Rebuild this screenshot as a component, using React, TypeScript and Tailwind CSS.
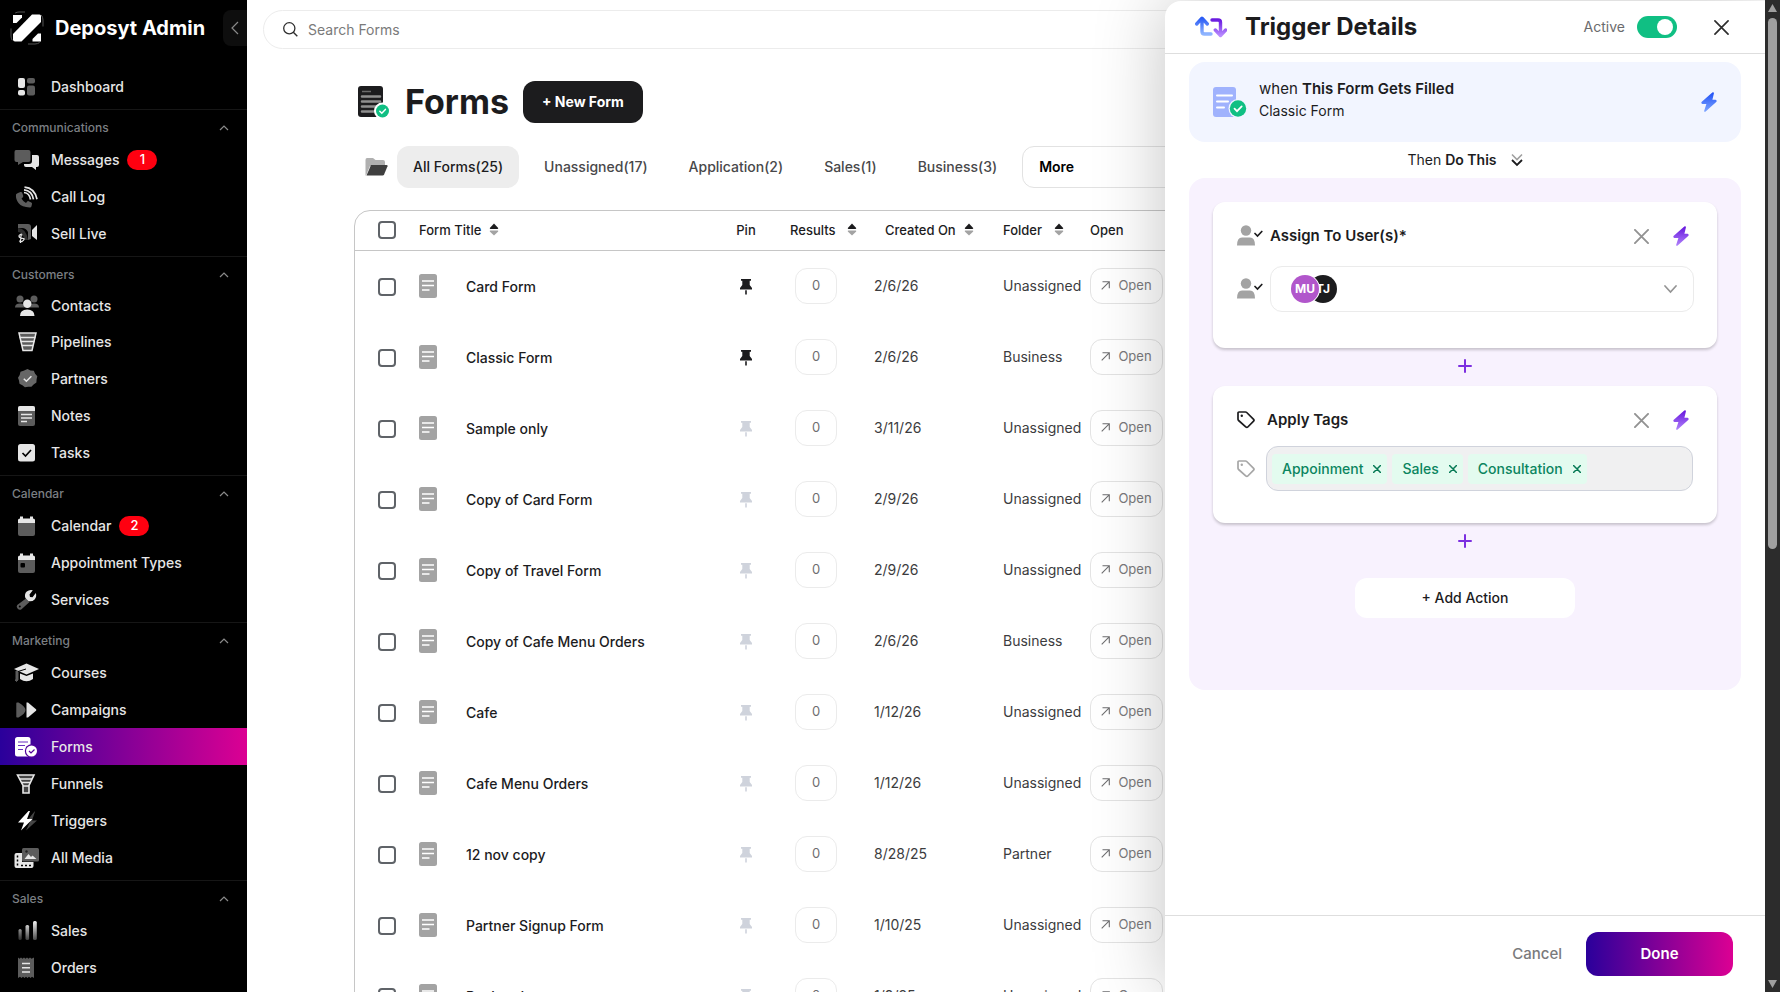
import { useState, type ReactNode } from "react";
import clsx from "clsx";

/* ------------------------------------------------------------------ */
/*  Data                                                               */
/* ------------------------------------------------------------------ */

type NavItem = { label: string; icon: ReactNode; badge?: number; active?: boolean };
type NavSection = { title: string; items: NavItem[] };

type FormRow = {
  title: string;
  date: string;
  folder: string;
  pinned?: boolean;
};

const LIGHT = "#e6e6e6";
const DIM = "#5c5c5c";

const FORMS: FormRow[] = [
  { title: "Card Form", date: "2/6/26", folder: "Unassigned", pinned: true },
  { title: "Classic Form", date: "2/6/26", folder: "Business", pinned: true },
  { title: "Sample only", date: "3/11/26", folder: "Unassigned" },
  { title: "Copy of Card Form", date: "2/9/26", folder: "Unassigned" },
  { title: "Copy of Travel Form", date: "2/9/26", folder: "Unassigned" },
  { title: "Copy of Cafe Menu Orders", date: "2/6/26", folder: "Business" },
  { title: "Cafe", date: "1/12/26", folder: "Unassigned" },
  { title: "Cafe Menu Orders", date: "1/12/26", folder: "Unassigned" },
  { title: "12 nov copy", date: "8/28/25", folder: "Partner" },
  { title: "Partner Signup Form", date: "1/10/25", folder: "Unassigned" },
  { title: "Backend", date: "1/9/25", folder: "Unassigned" },
];

const TABS = ["All Forms(25)", "Unassigned(17)", "Application(2)", "Sales(1)", "Business(3)"];

/* ------------------------------------------------------------------ */
/*  Sidebar icons (26x22 box)                                          */
/* ------------------------------------------------------------------ */

function NavSvg({ children }: { children: ReactNode }) {
  return (
    <svg width="26" height="22" viewBox="0 0 26 22" fill="none" aria-hidden="true">
      {children}
    </svg>
  );
}

const icons = {
  dashboard: (
    <NavSvg>
      <rect x="4" y="2" width="7" height="10" rx="2" fill={LIGHT} />
      <rect x="4" y="14" width="7" height="5.5" rx="2" fill={LIGHT} />
      <rect x="13" y="2" width="8" height="5.5" rx="2" fill={DIM} />
      <rect x="13" y="9.5" width="8" height="10" rx="2" fill={DIM} />
    </NavSvg>
  ),
  messages: (
    <NavSvg>
      <path d="M13 6h10q2 0 2 2v8q0 2-2 2h-1v3l-4-3h-6q-2 0-2-2v-1h5q3 0 3-3V6z" fill={LIGHT} />
      <path d="M2 1h12.500q2 0 2 2v8q0 2-2 2H9l-5 3v-3H2.500q-2 0-2-2V3q0-2 1.500-2z" fill={DIM} />
    </NavSvg>
  ),
  callLog: (
    <NavSvg>
      <path
        d="M4 7l2.500-1q1.200-.4 1.700.8l1 3q.3.900-.5 1.600l-1.200 1q1.500 3 4.500 4.500l1-1.200q.7-.8 1.600-.5l2.700 1.200q1 .5.700 1.600l-.6 2.400q-.3 1-1.400 1Q8 21.500 4.500 17 1.500 13 2 8.500 2.400 7.500 4 7z"
        fill={DIM}
      />
      <path d="M10 6.500q5.500.5 6.500 7M10 3.800q8 .7 9.500 9.500M10.500 1.200q10 .8 12.500 12" stroke={LIGHT} strokeWidth="1.700" />
    </NavSvg>
  ),
  sellLive: (
    <NavSvg>
      <path d="M4 1h10q3 0 3 3v12l-3 1V9q-2-4-6-4L4 5z" fill={DIM} />
      <path d="M4 5q8 0 10 12h-4Q9 9 4 9z" fill="#2e2e2e" />
      <path d="M18 7l5-5v15l-5-4z" fill={LIGHT} />
      <path d="M8.500 12q-3.500-1-3.500 1t3.500 2.300-.5 3.200l-3-.5M7.200 10.500l-.8 9.500" stroke={LIGHT} strokeWidth="1.200" />
    </NavSvg>
  ),
  contacts: (
    <NavSvg>
      <circle cx="6" cy="4" r="3.500" fill={DIM} />
      <circle cx="20" cy="4" r="3.500" fill={DIM} />
      <path d="M1 12.500q0-4 5-4t5 4zM15 12.500q0-4 5-4t5 4z" fill={DIM} />
      <circle cx="13.300" cy="8.800" r="4.200" fill={LIGHT} />
      <path d="M6 21q0-6.500 7.200-6.500T20.500 21z" fill={LIGHT} />
    </NavSvg>
  ),
  pipelines: (
    <NavSvg>
      <path d="M5 2h17l-4 17.500H9z" fill={DIM} stroke={LIGHT} strokeWidth="1.500" />
      <path d="M5.500 6.500h16M6.500 10.500h14M8 14.500h11" stroke={LIGHT} strokeWidth="1.400" />
    </NavSvg>
  ),
  partners: (
    <NavSvg>
      <path
        d="M13.500 1l3 1.500 3.300.2 1.300 3 2.200 2.500-.7 3.200-.2 3.200-2.800 1.800-2.200 2.400-3.200-.1-3.300.6-2.500-2.100-2.900-1.500-.5-3.200L4 9.800l1.700-2.900.8-3.100 3.100-1z"
        fill="#666"
      />
      <path d="M9.800 10.700l2.600 2.600 5-5" stroke={LIGHT} strokeWidth="1.500" />
    </NavSvg>
  ),
  notes: (
    <NavSvg>
      <rect x="4" y="1" width="17" height="20" rx="2" fill={DIM} />
      <path d="M4 6V3q0-2 2-2h13q2 0 2 2v3z" fill={LIGHT} />
      <path d="M7 9.500h11M7 13h11M7 16.500h6" stroke={LIGHT} strokeWidth="1.400" />
    </NavSvg>
  ),
  tasks: (
    <NavSvg>
      <rect x="4" y="2" width="17" height="17.500" rx="2.500" fill={LIGHT} />
      <path d="M8.500 11l3 3 5.500-6" stroke="#000" strokeWidth="1.700" />
    </NavSvg>
  ),
  calendar: (
    <NavSvg>
      <path d="M4 8h17v11q0 2-2 2H6q-2 0-2-2z" fill={DIM} />
      <path d="M4 8V5q0-1.500 2-1.500V1.500h3v2h7v-2h3v2q2 0 2 1.500v3z" fill={LIGHT} />
    </NavSvg>
  ),
  appointments: (
    <NavSvg>
      <path d="M4 8h17v11q0 2-2 2H6q-2 0-2-2z" fill={DIM} />
      <path d="M4 8V5q0-1.500 2-1.500V1.500h3v2h7v-2h3v2q2 0 2 1.500v3z" fill={LIGHT} />
      <rect x="6.500" y="11" width="4.500" height="4.500" rx="1" fill="#000" />
    </NavSvg>
  ),
  services: (
    <NavSvg>
      <path d="M12 9.500l3.500 3.500-8 7.200q-2 1.300-3.800-.5t-.5-3.700z" fill={DIM} />
      <path d="M18.800 1.200l-3.300 4.300.5 2.500 2.500.3 3.300-4.300q1.200 3.800-1.200 6.400-2.500 2.600-6.200 1.700l-3-3Q10 5 12.800 2.500q2.700-2.300 6-1.300z" fill={LIGHT} />
      <circle cx="5.800" cy="17.500" r="1" fill="#000" />
    </NavSvg>
  ),
  courses: (
    <NavSvg>
      <path d="M2 9v9H1l1.500 1.500L4 18V9z" fill={DIM} stroke={DIM} />
      <path d="M12.500 1.500L25 7l-12.500 5.500L0 7z" fill={LIGHT} />
      <path d="M6 11.500l6.500 2.600 6.500-2.600v5.500q-6.500 4.500-13 0z" fill={LIGHT} />
      <path d="M4 9.500l8-2.500" stroke="#000" strokeWidth="1" />
    </NavSvg>
  ),
  campaigns: (
    <NavSvg>
      <path d="M3 3.500h1.500q7 4 7 7.500t-7 7.500H3q-.7 0-.7-.7V4.200q0-.7.7-.7z" fill={DIM} />
      <path d="M12.500 3.500h1.500l8 6.800q.8.700 0 1.400l-8 6.800h-1.500z" fill={LIGHT} />
    </NavSvg>
  ),
  forms: (
    <NavSvg>
      <rect x="1" y="1" width="15.500" height="19.500" rx="2.500" fill="#fff" />
      <path d="M4 6h10M4 9.500h7M4 13.500h5" stroke="#6a2fc0" strokeWidth="1.200" />
      <circle cx="17.500" cy="15" r="6.700" fill="#4f009a" />
      <circle cx="17.500" cy="15" r="5.500" fill="#fff" />
      <path d="M15 15l2 2 3.500-3.500" stroke="#55009b" strokeWidth="1.200" />
    </NavSvg>
  ),
  funnels: (
    <NavSvg>
      <path d="M3.500 2h16.500l-5 10.500V20H9v-7.500z" fill="#444" stroke={LIGHT} strokeWidth="1.600" />
      <path d="M5.500 6h12.500M7.500 9.500h8.500M9 13h6" stroke={LIGHT} strokeWidth="1.400" />
    </NavSvg>
  ),
  triggers: (
    <NavSvg>
      <path d="M20.500 1.500L12 12h4l-4 8.500L23 10.500h-5l3-9z" fill="#454545" />
      <path d="M14.500 1L4 12.500h6L7 20.500 18.500 9H13l3-8z" fill="#fff" />
    </NavSvg>
  ),
  media: (
    <NavSvg>
      <path d="M2.500 6H8v9h11.500v4q0 2-2 2h-15q-2 0-2-2V8q0-2 2-2z" fill={LIGHT} />
      <path d="M3.500 8.500v10M7 18.500h11" stroke="#000" strokeWidth="1.500" strokeDasharray="2 2" />
      <rect x="8" y="1" width="17" height="13.500" rx="1.500" fill={DIM} />
      <path d="M10.500 12l4-5 2.500 3 1.500-1.500 4 3.500z" fill={LIGHT} />
      <circle cx="12.500" cy="4.500" r="1.200" fill="#222" />
    </NavSvg>
  ),
  sales: (
    <NavSvg>
      <defs>
        <linearGradient id="bars" x1="0" y1="0" x2="0" y2="1">
          <stop stopColor="#f2f2f2" />
          <stop offset="1" stopColor="#4a4a4a" />
        </linearGradient>
      </defs>
      <rect x="4.500" y="9" width="3.200" height="11" rx="1.500" fill="url(#bars)" opacity=".6" />
      <rect x="11.500" y="5" width="3.600" height="15" rx="1.500" fill="url(#bars)" opacity=".85" />
      <rect x="19" y="1" width="3.800" height="19" rx="1.500" fill="url(#bars)" />
    </NavSvg>
  ),
  orders: (
    <NavSvg>
      <path
        d="M4 .5l1.500 1.200L7 .5l1.500 1.200L10 .5l1.500 1.200L13 .5l1.500 1.200L16 .5l1.500 1.200L20 .5v20.500l-2-1.200-1.500 1.200-1.500-1.200-1.500 1.200-1.500-1.200-1.500 1.200L9 19.800 7.500 21 6 19.800 4 21z"
        fill={DIM}
      />
      <path d="M8 6.500h8M8 10.700h8M8 15h8" stroke={LIGHT} strokeWidth="1.500" />
    </NavSvg>
  ),
};

const SECTIONS: NavSection[] = [
  {
    title: "Communications",
    items: [
      { label: "Messages", icon: icons.messages, badge: 1 },
      { label: "Call Log", icon: icons.callLog },
      { label: "Sell Live", icon: icons.sellLive },
    ],
  },
  {
    title: "Customers",
    items: [
      { label: "Contacts", icon: icons.contacts },
      { label: "Pipelines", icon: icons.pipelines },
      { label: "Partners", icon: icons.partners },
      { label: "Notes", icon: icons.notes },
      { label: "Tasks", icon: icons.tasks },
    ],
  },
  {
    title: "Calendar",
    items: [
      { label: "Calendar", icon: icons.calendar, badge: 2 },
      { label: "Appointment Types", icon: icons.appointments },
      { label: "Services", icon: icons.services },
    ],
  },
  {
    title: "Marketing",
    items: [
      { label: "Courses", icon: icons.courses },
      { label: "Campaigns", icon: icons.campaigns },
      { label: "Forms", icon: icons.forms, active: true },
      { label: "Funnels", icon: icons.funnels },
      { label: "Triggers", icon: icons.triggers },
      { label: "All Media", icon: icons.media },
    ],
  },
  {
    title: "Sales",
    items: [
      { label: "Sales", icon: icons.sales },
      { label: "Orders", icon: icons.orders },
    ],
  },
];

/* ------------------------------------------------------------------ */
/*  Shared icons                                                       */
/* ------------------------------------------------------------------ */

function Bolt({ id, from, to }: { id: string; from: string; to: string }) {
  return (
    <svg width="16" height="20" viewBox="0 0 16 20" aria-hidden="true">
      <defs>
        <linearGradient id={id} x1="0" y1="0" x2="0" y2="1">
          <stop stopColor={from} />
          <stop offset="1" stopColor={to} />
        </linearGradient>
      </defs>
      <path
        d="M11.300.400L.8 9.800q-1.200 1.500.6 2.200h4l-2.200 6.800q-.2 1.500 1.200.9L15.200 10q1.200-1.500-.6-2.200h-3.200l1.500-6.400q.1-1.600-1.600-1z"
        fill={`url(#${id})`}
      />
    </svg>
  );
}

function Cross({ size, color, width = 2 }: { size: number; color: string; width?: number }) {
  return (
    <svg width={size} height={size} viewBox="0 0 16 16" fill="none" aria-hidden="true">
      <path d="M1 1l14 14M15 1L1 15" stroke={color} strokeWidth={width} strokeLinecap="round" />
    </svg>
  );
}

function Plus() {
  return (
    <svg width="14" height="14" viewBox="0 0 14 14" aria-hidden="true">
      <path d="M7 1v12M1 7h12" stroke="#7c2fe0" strokeWidth="2" strokeLinecap="round" />
    </svg>
  );
}

function UserCheck() {
  return (
    <svg width="26" height="22" viewBox="0 0 26 22" fill="none" aria-hidden="true">
      <circle cx="9" cy="5.500" r="5.200" fill="#a3a3a3" />
      <path d="M0 20.500q0-8 5-8h8q5 0 5 8z" fill="#a3a3a3" />
      <path d="M18 8.500l2.500 2.500 4.300-4.500" stroke="#1c1c1e" strokeWidth="1.700" strokeLinecap="round" />
    </svg>
  );
}

function TagIcon({ color }: { color: string }) {
  return (
    <svg width="18" height="18" viewBox="0 0 18 18" fill="none" aria-hidden="true">
      <path
        d="M2 1h6.500q.7 0 1.200.5l6.900 6.900q.8.900 0 1.700L10.800 16q-.9.900-1.800 0L1.600 9.500Q1 9 1 8.200V2q0-1 1-1z"
        stroke={color}
        strokeWidth="1.700"
      />
      <circle cx="4.800" cy="4.800" r="1.200" fill={color} />
    </svg>
  );
}

function DocCheck({ fill, line }: { fill: string; line: string }) {
  return (
    <svg width="36" height="32" viewBox="0 0 36 32" fill="none" aria-hidden="true">
      <rect x="1" y="1" width="23" height="30" rx="3" fill={fill} />
      <path d="M5 9.500h15M5 15.500h11M5 21.500h7" stroke={line} strokeWidth="2" strokeLinecap="round" />
      <circle cx="26" cy="22.500" r="9.500" fill="#f2f5ff" />
      <circle cx="26" cy="22.500" r="8.200" fill="#10bf83" />
      <path d="M22.500 22.700l2.500 2.500 4.700-4.900" stroke="#fff" strokeWidth="1.700" strokeLinecap="round" />
    </svg>
  );
}

function SortIcon() {
  return (
    <svg width="10" height="14" viewBox="0 0 10 14" aria-hidden="true">
      <path d="M5 .5l4.200 4.500q.3.800-.6.900H1.400Q.5 5.800.8 5z" fill="#1c1c1e" />
      <path d="M5 12.500L.8 8.500q-.3-.8.600-.9h7.200q.9.100.6.900z" fill="#a3a3a3" />
    </svg>
  );
}

function SortButton({ label }: { label: string }) {
  return (
    <button type="button" aria-label={`Sort by ${label}`}>
      <SortIcon />
    </button>
  );
}

function Checkbox({ label }: { label: string }) {
  return (
    <input
      type="checkbox"
      aria-label={label}
      className="block size-[18px] appearance-none rounded border-2 border-[#5f6368] bg-white checked:bg-[#5f6368]"
    />
  );
}

/* ------------------------------------------------------------------ */
/*  Sidebar                                                            */
/* ------------------------------------------------------------------ */

function NavLink({ item, first }: { item: NavItem; first?: boolean }) {
  return (
    <a
      href="#"
      className={clsx(
        "flex items-center gap-[11px] pl-[14px] text-sm font-medium text-[#e6e6e6]",
        first ? "h-[35px]" : "h-[37px]",
        item.active && "bg-linear-to-r/srgb from-[#2a009b] to-[#dc0093]"
      )}
    >
      {item.icon}
      <span className="flex items-center gap-2">
        {item.label}
        {item.badge && (
          <span className="flex h-5 w-[30px] items-center justify-center rounded-full bg-[#ff0010] text-[13px] text-white">
            {item.badge}
          </span>
        )}
      </span>
    </a>
  );
}

function Sidebar() {
  return (
    <nav className="flex w-[247px] shrink-0 flex-col overflow-hidden bg-black">
      <div className="flex h-[68px] shrink-0 items-start pt-[10px]">
        <svg width="34" height="34" viewBox="0 0 34 34" className="mt-px ml-[10px] shrink-0" aria-hidden="true">
          <rect x="1" y="1" width="32" height="32" rx="8" fill="none" stroke="#555" strokeDasharray="12 17" strokeDashoffset="6" />
          <path d="M22 3.500h7.500q1.500 0 1.500 1.500v6L11.500 30.500H5q-2 0-2-2V23z" fill="#fff" />
          <path d="M3 4h9v2.500L6.500 12H3z" fill="#fff" />
          <path d="M31 30.500h-8.500v-2.500l5.500-5.500h3z" fill="#fff" />
        </svg>
        <span className="mt-[2px] ml-[11px] text-xl leading-8 font-bold whitespace-nowrap text-white">Deposyt Admin</span>
        <button
          type="button"
          aria-label="Collapse sidebar"
          className="ml-auto flex h-9 w-6 items-center justify-center rounded-l-lg bg-[#0e0e0e]"
        >
          <svg width="8" height="14" viewBox="0 0 8 14" fill="none" aria-hidden="true">
            <path d="M7 1L1 7l6 6" stroke="#8a8a8a" strokeWidth="1.200" />
          </svg>
        </button>
      </div>
      <NavLink item={{ label: "Dashboard", icon: icons.dashboard }} />
      {SECTIONS.map((section) => (
        <section key={section.title} className="mt-1 border-t border-[#161616]">
          <button
            type="button"
            aria-expanded="true"
            className="flex h-[31px] w-full items-center justify-between pt-[5px] pr-[18px] pl-3 text-xs font-medium text-[#7b7f83]"
          >
            {section.title}
            <svg width="10" height="6" viewBox="0 0 10 6" fill="none" aria-hidden="true">
              <path d="M1 5l4-4 4 4" stroke="#8a8a8a" strokeWidth="1.200" />
            </svg>
          </button>
          {section.items.map((item, i) => (
            <NavLink key={item.label} item={item} first={i === 0 && section.title === "Customers"} />
          ))}
        </section>
      ))}
    </nav>
  );
}

/* ------------------------------------------------------------------ */
/*  Forms list                                                         */
/* ------------------------------------------------------------------ */

function FormsTable() {
  return (
    <div className="mt-[22px] overflow-hidden rounded-t-2xl border border-[#c6c6c6]">
      <table className="w-full table-fixed text-left">
        <colgroup>
          <col className="w-16" />
          <col className="w-[299px]" />
          <col className="w-14" />
          <col className="w-[100px]" />
          <col className="w-[129px]" />
          <col className="w-[87px]" />
          <col />
        </colgroup>
        <thead className="text-[13px] text-[#1c1c1e]">
          <tr className="h-[39px] border-b border-[#c6c6c6] whitespace-nowrap">
            <th className="pl-[23px]">
              <Checkbox label="Select all forms" />
            </th>
            <th className="font-medium">
              <span className="flex items-center gap-2">
                Form Title <SortButton label="Form Title" />
              </span>
            </th>
            <th className="text-center font-medium">Pin</th>
            <th className="pl-4 font-medium">
              <span className="flex items-center gap-3">
                Results <SortButton label="Results" />
              </span>
            </th>
            <th className="pl-[11px] font-medium">
              <span className="flex items-center gap-2">
                Created On <SortButton label="Created On" />
              </span>
            </th>
            <th className="font-medium">
              <span className="flex items-center gap-3">
                Folder <SortButton label="Folder" />
              </span>
            </th>
            <th className="font-medium">Open</th>
          </tr>
        </thead>
        <tbody className="text-sm text-[#3c3c3e]">
          {FORMS.map((form) => (
            <tr key={form.title} className="h-[71px]">
              <td className="pt-0.5 pl-[23px]">
                <Checkbox label={`Select ${form.title}`} />
              </td>
              <td>
                <span className="flex items-center gap-[29px] font-medium text-[#1c1c1e]">
                  <svg width="18" height="24" viewBox="0 0 18 24" aria-hidden="true">
                    <rect width="18" height="24" rx="2.500" fill="#a3a3a3" />
                    <path d="M3 7h12M3 11.500h12M3 16h7.500" stroke="#fff" strokeWidth="1.600" />
                  </svg>
                  <span className="pt-0.5">{form.title}</span>
                </span>
              </td>
              <td className="text-center">
                <button type="button" aria-label={`Pin ${form.title}`} className="align-middle">
                  <svg width="14" height="16" viewBox="0 0 14 16" aria-hidden="true">
                    <path
                      d="M2 0h10v1.800h-1.300V6L13 9v1.500H1V9l2.300-3V1.800H2zM6.200 11.300h1.600v4.200H6.200z"
                      fill={form.pinned ? "#1c1c1e" : "#cfd3dc"}
                    />
                  </svg>
                </button>
              </td>
              <td className="pl-[21px]">
                <button type="button" className="block h-9 w-[42px] rounded-xl border border-[#ebebeb] text-[13px] text-[#6e6e70]">
                  0
                </button>
              </td>
              <td>{form.date}</td>
              <td>{form.folder}</td>
              <td>
                <a
                  href="#"
                  className="flex h-9 w-[73px] items-center justify-center gap-2 rounded-xl border border-[#e3e3e3] text-[13px] text-[#7a7a7c]"
                >
                  <svg width="9" height="9" viewBox="0 0 9 9" fill="none" aria-hidden="true">
                    <path d="M.7 8.300l7.500-7.500M1.500.7h6.800v6.500" stroke="#6e6e70" strokeWidth="1.100" />
                  </svg>
                  Open
                </a>
              </td>
            </tr>
          ))}
        </tbody>
      </table>
    </div>
  );
}

function FormsPage() {
  const [tab, setTab] = useState(TABS[0]);

  return (
    <main className="min-w-0 flex-1 overflow-hidden bg-white">
      <div className="px-4 pt-[10px]">
        <label className="flex h-[39px] items-center gap-[11px] rounded-full border border-[#ececec] pl-[19px]">
          <svg width="15" height="15" viewBox="0 0 15 15" fill="none" aria-hidden="true">
            <circle cx="6.300" cy="6.300" r="5.600" stroke="#2e2e2e" strokeWidth="1.300" />
            <path d="M10.300 10.300l4 4" stroke="#2e2e2e" strokeWidth="1.400" />
          </svg>
          <input
            type="search"
            aria-label="Search Forms"
            placeholder="Search Forms"
            className="-ml-px flex-1 pt-px text-sm placeholder:text-[#7a7a7a] focus:outline-none"
          />
        </label>
      </div>

      <div className="px-[107px]">
        <header className="mt-8 flex items-center gap-[14px]">
          <div className="flex items-center gap-[15px] pl-1">
            <svg width="32" height="32" viewBox="0 0 32 32" fill="none" aria-hidden="true">
              <rect width="25" height="31" rx="3" fill="#1c1c1e" />
              <path d="M4 5.500h9" stroke="#6b6b6b" strokeWidth="1.500" />
              <path d="M4 10.500h18M4 15.500h18M4 20.500h15M4 25.500h13" stroke="#8f8f8f" strokeWidth="2.500" strokeLinecap="round" />
              <circle cx="24.500" cy="25" r="8.500" fill="#fff" />
              <circle cx="24.500" cy="25" r="6.500" fill="#10bf83" />
              <path d="M21.800 25.200l2 2 3.600-3.800" stroke="#fff" strokeWidth="1.500" strokeLinecap="round" />
            </svg>
            <h1 className="text-[34px] leading-10 font-bold text-[#1c1c1e]">Forms</h1>
          </div>
          <button type="button" className="h-[42px] rounded-xl bg-[#1c1c1e] px-[19px] text-sm font-bold text-white">
            + New Form
          </button>
        </header>

        <div className="mt-[23px] flex items-center gap-[9px] whitespace-nowrap">
          <svg width="23" height="18" viewBox="0 0 23 18" className="ml-[11px]" aria-hidden="true">
            <path d="M2 0h6l2.500 2H18q2 0 2 2v4H5L1 17.500H.5V2Q.5 0 2 0z" fill="#b0b0b0" />
            <path d="M6 7h15.500q1.500 0 1 1.300l-3.300 8q-.5 1.200-1.700 1.200H1.500z" fill="#3f3f3f" />
          </svg>
          {TABS.map((name) => (
            <button
              key={name}
              type="button"
              onClick={() => setTab(name)}
              className={clsx(
                "h-[42px] rounded-xl px-4 text-sm font-medium",
                tab === name ? "bg-[#ededed] text-[#1c1c1e]" : "text-[#48484a]"
              )}
            >
              {name}
            </button>
          ))}
          <select
            aria-label="More folders"
            className="h-[42px] w-[200px] appearance-none rounded-xl border border-[#e2e2e2] px-4 text-sm font-semibold text-black"
          >
            <option>More</option>
          </select>
        </div>

        <FormsTable />
      </div>
    </main>
  );
}

/* ------------------------------------------------------------------ */
/*  Trigger details drawer                                             */
/* ------------------------------------------------------------------ */

function ActionCard({ id, icon, title, children }: { id: string; icon: ReactNode; title: string; children: ReactNode }) {
  return (
    <section className="rounded-xl bg-white px-6 pt-6 shadow-[0_2px_3px_rgba(0,0,0,0.2)]">
      <div className="flex h-5 items-center">
        {icon}
        <h3 className="flex-1 text-[15px] font-semibold text-[#1c1c1e]">{title}</h3>
        <button type="button" aria-label={`Remove ${title}`} className="mr-6">
          <Cross size={15} color="#929292" />
        </button>
        <button type="button" aria-label={`Configure ${title}`} className="mr-1">
          <Bolt id={id} from="#6514dd" to="#b184fb" />
        </button>
      </div>
      {children}
    </section>
  );
}

function AddStep() {
  return (
    <button type="button" aria-label="Add step" className="flex h-[38px] w-full items-center justify-center pb-0.5">
      <Plus />
    </button>
  );
}

function TriggerDrawer() {
  const [active, setActive] = useState(true);
  const [tags, setTags] = useState(["Appoinment", "Sales", "Consultation"]);

  return (
    <aside className="absolute inset-y-0 right-0 mt-px flex w-[600px] flex-col overflow-hidden rounded-tl-2xl bg-white shadow-[0_0_72px_rgba(0,0,0,0.24)]">
      <header className="flex h-[53px] shrink-0 items-center border-b border-[#dedede] pr-9 pl-[30px]">
        <svg width="32" height="22" viewBox="0 0 32 22" fill="none" aria-hidden="true">
          <defs>
            <linearGradient id="swap-up" x1="0" y1="0" x2="0" y2="1">
              <stop stopColor="#2a5bf5" />
              <stop offset="1" stopColor="#8fb5ff" />
            </linearGradient>
            <linearGradient id="swap-down" x1="0" y1="0" x2="0" y2="1">
              <stop stopColor="#6a1be0" />
              <stop offset="1" stopColor="#b88bff" />
            </linearGradient>
          </defs>
          <path d="M7 3v12.500q0 2.500 2.500 2.500H16M1.700 8L7 2.200 12.300 8" stroke="url(#swap-up)" strokeWidth="3.400" strokeLinecap="round" strokeLinejoin="round" />
          <path d="M17 4h6q2.500 0 2.500 2.500V18M20.300 14l5.200 5.500 5.200-5.500" stroke="url(#swap-down)" strokeWidth="3.400" strokeLinecap="round" strokeLinejoin="round" />
        </svg>
        <h2 className="ml-[18px] flex-1 text-2xl font-bold text-[#1c1c1e]">Trigger Details</h2>
        <label className="flex items-center gap-3 text-sm text-[#6b6b6d]">
          Active
          <input
            type="checkbox"
            role="switch"
            checked={active}
            onChange={(e) => setActive(e.target.checked)}
            className="peer sr-only"
          />
          <span
            className={clsx(
              "flex h-[22px] w-10 items-center rounded-full px-1 peer-focus-visible:ring-2",
              active ? "justify-end bg-[#10bf83]" : "justify-start bg-[#c6c6c6]"
            )}
          >
            <span className="size-4 rounded-full bg-white" />
          </span>
        </label>
        <button type="button" aria-label="Close" className="ml-[37px]">
          <Cross size={15} color="#2e2e2e" width={1.8} />
        </button>
      </header>

      <div className="flex-1 overflow-hidden px-6 pt-2">
        <section className="flex h-20 items-center rounded-2xl bg-[#f2f5ff] pr-6 pl-[23px]">
          <DocCheck fill="#a0b2fd" line="#fff" />
          <div className="ml-[11px] flex-1 pb-1 text-[15px] leading-[22px] text-[#1c1c1e]">
            <p>
              when <strong className="font-semibold">This Form Gets Filled</strong>
            </p>
            <p className="text-sm leading-[22px]">Classic Form</p>
          </div>
          <Bolt id="bolt-when" from="#1f4ff5" to="#7fa6ff" />
        </section>

        <p className="flex h-9 items-center justify-center gap-[14px] text-sm text-[#1c1c1e]">
          <span>
            Then <strong className="font-semibold">Do This</strong>
          </span>
          <svg width="12" height="14" viewBox="0 0 12 14" fill="none" aria-hidden="true">
            <path d="M1 1.500l5 5 5-5" stroke="#a0a0a0" strokeWidth="1.600" />
            <path d="M1 7l5 5 5-5" stroke="#1c1c1e" strokeWidth="1.800" />
          </svg>
        </p>

        <div className="rounded-2xl bg-[#f8f2fe] px-6 pt-6 pb-[72px]">
          <ActionCard
            id="bolt-assign"
            title="Assign To User(s)*"
            icon={
              <span className="mr-[7px]">
                <UserCheck />
              </span>
            }
          >
            <div className="mt-5 flex items-center gap-[7px] pb-9">
              <UserCheck />
              <button
                type="button"
                aria-haspopup="listbox"
                aria-label="Assigned users"
                className="-mr-px flex h-[46px] flex-1 items-center rounded-xl border border-[#ebebeb] pr-4 pl-5 text-xs font-bold text-white"
              >
                <span className="z-10 flex size-7 items-center justify-center rounded-full bg-[#b156cb] ring-1 ring-white">MU</span>
                <span className="-ml-[10px] flex size-7 items-center justify-center rounded-full bg-[#1c1c1e]">TJ</span>
                <svg width="13" height="9" viewBox="0 0 13 9" fill="none" className="ml-auto" aria-hidden="true">
                  <path d="M1 1l5.500 6L12 1" stroke="#949494" strokeWidth="1.700" strokeLinecap="round" />
                </svg>
              </button>
            </div>
          </ActionCard>

          <AddStep />

          <ActionCard
            id="bolt-tags"
            title="Apply Tags"
            icon={
              <span className="mr-3">
                <TagIcon color="#1c1c1e" />
              </span>
            }
          >
            <div className="mt-4 flex items-center gap-[11px] pb-8">
              <TagIcon color="#a6a6a6" />
              <div className="flex h-[45px] min-w-0 flex-1 items-center gap-[5px] rounded-xl border border-[#d0d3dc] bg-[#f0f0f1] px-[5px]">
                {tags.map((tag) => (
                  <span key={tag} className="flex h-[30px] items-center gap-[10px] rounded bg-[#e3fbef] pr-[6px] pl-[10px] text-sm font-medium text-[#0b8560]">
                    {tag}
                    <button type="button" aria-label={`Remove ${tag}`} onClick={() => setTags(tags.filter((t) => t !== tag))}>
                      <Cross size={8} color="#067a55" width={3} />
                    </button>
                  </span>
                ))}
                <input type="text" aria-label="Add tag" className="w-full min-w-0 flex-1 bg-transparent focus:outline-none" />
              </div>
            </div>
          </ActionCard>

          <AddStep />

          <div className="mt-[17px] flex justify-center">
            <button type="button" className="h-10 w-[220px] rounded-xl bg-white text-sm font-medium text-[#1c1c1e]">
              + Add Action
            </button>
          </div>
        </div>
      </div>

      <footer className="flex h-[77px] shrink-0 items-center justify-end gap-6 border-t border-[#dedede] pr-8">
        <button type="button" className="text-[15px] font-medium text-[#7a7a7c]">
          Cancel
        </button>
        <button
          type="button"
          className="h-11 w-[147px] rounded-xl bg-linear-to-r/srgb from-[#2a009b] to-[#dc0093] text-[15px] font-semibold text-white"
        >
          Done
        </button>
      </footer>
    </aside>
  );
}

/* ------------------------------------------------------------------ */
/*  App                                                                */
/* ------------------------------------------------------------------ */

export default function App() {
  return (
    <div className="flex h-screen overflow-hidden bg-white font-['Inter','Liberation_Sans',sans-serif]">
      <Sidebar />
      <div className="relative flex min-w-0 flex-1 overflow-hidden">
        <FormsPage />
        <TriggerDrawer />
      </div>
      {/* Page scroll track */}
      <div className="flex w-[15px] shrink-0 flex-col items-center bg-[#2c2c2c] py-1" aria-hidden="true">
        <svg width="9" height="8" viewBox="0 0 9 8">
          <path d="M4.500 0L9 8H0z" fill="#9f9f9f" />
        </svg>
        <div className="mt-[6px] h-[54%] w-[9px] rounded-full bg-[#9f9f9f]" />
        <svg width="9" height="8" viewBox="0 0 9 8" className="mt-auto">
          <path d="M4.500 8L0 0h9z" fill="#9f9f9f" />
        </svg>
      </div>
    </div>
  );
}
